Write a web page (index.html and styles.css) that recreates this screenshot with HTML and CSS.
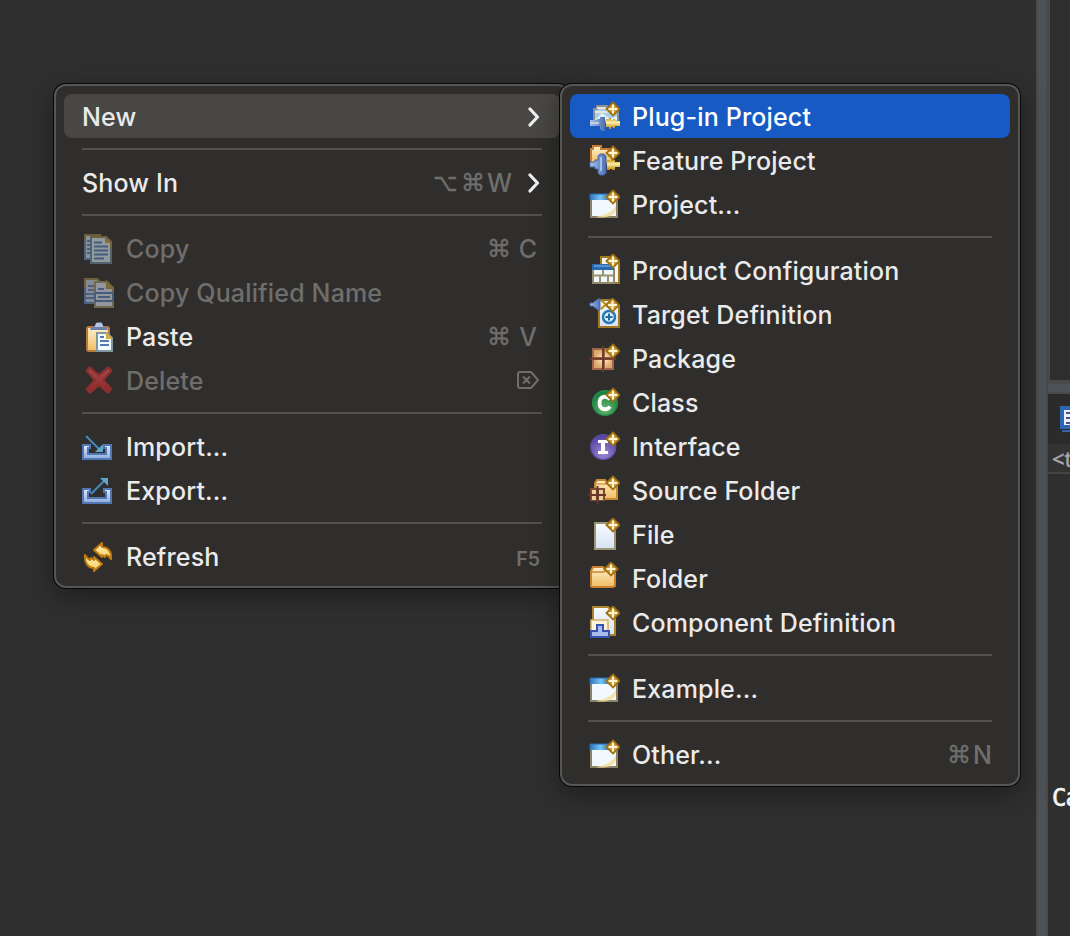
FILE: index.html
```html
<!DOCTYPE html>
<html lang="en">
<head>
<meta charset="utf-8">
<title>Context menu</title>
<link rel="stylesheet" href="styles.css">
</head>
<body>
<svg class="defs" width="0" height="0" aria-hidden="true">
  <defs>
    <linearGradient id="gFolder" x1="0" y1="0" x2="0" y2="1"><stop offset="0" stop-color="#fff0cc"/><stop offset="1" stop-color="#f0bd62"/></linearGradient>
    <linearGradient id="gArrow" x1="0" y1="0" x2="0" y2="1"><stop offset="0" stop-color="#fff3b8"/><stop offset="1" stop-color="#f7c95c"/></linearGradient>
    <linearGradient id="gPage" x1="0" y1="0" x2="0" y2="1"><stop offset="0" stop-color="#f8fbff"/><stop offset="1" stop-color="#d7e2f6"/></linearGradient>
    <linearGradient id="gBlue" x1="0" y1="0" x2="1" y2="0"><stop offset="0" stop-color="#a9c3ea"/><stop offset="1" stop-color="#4a6fb5"/></linearGradient>
    <linearGradient id="gGold" x1="0" y1="0" x2="0" y2="1"><stop offset="0" stop-color="#c79414"/><stop offset=".4" stop-color="#fff0a8"/><stop offset="1" stop-color="#b98207"/></linearGradient>
    <linearGradient id="gTray" x1="0" y1="0" x2="0" y2="1"><stop offset="0" stop-color="#dfe9fb"/><stop offset="1" stop-color="#8eabdc"/></linearGradient>
    <linearGradient id="gRed" x1="0" y1="0" x2="0" y2="1"><stop offset="0" stop-color="#a3504c"/><stop offset="1" stop-color="#952329"/></linearGradient>
    <linearGradient id="gTitle" x1="0" y1="0" x2="1" y2="0"><stop offset="0" stop-color="#2d76c0"/><stop offset=".5" stop-color="#76c3f2"/><stop offset="1" stop-color="#2d68ad"/></linearGradient>
    <radialGradient id="gGreen" cx=".5" cy=".75" r=".65"><stop offset="0" stop-color="#69b66d"/><stop offset="1" stop-color="#1c8040"/></radialGradient>
    <radialGradient id="gViolet" cx=".5" cy=".75" r=".65"><stop offset="0" stop-color="#9d8bd5"/><stop offset="1" stop-color="#5845a2"/></radialGradient>
    <radialGradient id="gTile"><stop offset="0" stop-color="#fff0c2"/><stop offset="1" stop-color="#dca76c"/></radialGradient>
    <symbol id="spark" viewBox="0 0 16 16"><path d="M8 1.400 14.600 8 8 14.600 1.400 8Z" fill="#c9a04a" stroke="#a0710c" stroke-width="1.800"/><path d="M8 3.600v8.800M3.600 8h8.800" stroke="#fff4cf" stroke-width="2"/></symbol>
    <symbol id="i-plugin" viewBox="0 0 32 32"><path d="M6 22V9h3V6h10v3h11v13Z" fill="#a8cfee" stroke="#8c8f91" stroke-width="2"/><path d="M7 12h19M9 8h9" stroke="#e5e5db" stroke-width="2"/><path d="M7 20 14 13 22 19 29 16v4H7Z" fill="#e3f3fc"/><path d="M2 20h7v-1h3v-2h5v14h-3l-2-2v-3H2Z" fill="url(#gBlue)"/><path d="M2 23h9" stroke="#c3d0df" stroke-width="2"/><path d="M18 19h3v-1h2v2h2v-1h2v2h5v5h-5v2h-2v-1h-2v2h-2v-2h-3Z" fill="url(#gGold)"/><use href="#spark" x="17" y="1" width="16" height="16"/></symbol>
    <symbol id="i-feature" viewBox="0 0 32 32"><path d="M3 19V5h2V2h8v3h11v14Z" fill="url(#gFolder)" stroke="#c67e35" stroke-width="2"/><path d="M2 18h5v-2h3v-4l2-2h4l2 2v17l-2 2h-4l-2-2v-4H7v-2H2Z" fill="url(#gBlue)" stroke="#4166ac"/><path d="M13 13v14" stroke="#a5bfe8" stroke-width="2"/><path d="M19 16h3v1h2v-1h3v2h5v5h-5v3h-3v-1h-2v1h-3Z" fill="url(#gGold)"/><use href="#spark" x="17" y="1" width="16" height="16"/></symbol>
    <symbol id="i-window" viewBox="0 0 32 32"><path d="M3 7h26v22H3Z" fill="#f1f8fe" stroke="#8c826a" stroke-width="2"/><path d="M2 6h21v6H2Z" fill="url(#gTitle)"/><path d="M2 12v-6h22" fill="none" stroke="#286aad"/><path d="M28 15c0 7-9 12-20 14 8 2 20-1 20-8Z" fill="#f4df9a" opacity=".85"/><use href="#spark" x="17" y="1" width="16" height="16"/></symbol>
    <symbol id="i-product" viewBox="0 0 32 32"><path d="M13 3h12l6 6v20H13Z" fill="#f4f5f4" stroke="#a27a25" stroke-width="2"/><path d="M5 15h21v14H5Z" fill="#eff7fb" stroke="#92896b" stroke-width="2"/><path d="M5 21.500h20M15 16v5M12 21v8M20 22v7" stroke="#9a9171" stroke-width="2"/><path d="M4 10h22v6H4Z" fill="#286ab0"/><path d="M6 12h18" stroke="#689edb" stroke-width="1.500"/><use href="#spark" x="17" y="-1" width="16" height="16"/></symbol>
    <symbol id="i-target" viewBox="0 0 32 32"><path d="M11 2h14l6 6v21H11Z" fill="url(#gPage)" stroke="#a27a25" stroke-width="2"/><circle cx="21" cy="19" r="6" fill="#e0eefa" stroke="#2479b8" stroke-width="2.500"/><path d="M21 15.500v7M17.500 19h7" stroke="#226ba3" stroke-width="2"/><path d="M2 5h3l5-4h2v11h-2l-5-4H2Z" fill="url(#gBlue)" stroke="#4a6fb5"/><path d="M13 2 18 6.500 13 11" fill="#fff0bf" stroke="#bd890e" stroke-width="1.800"/><use href="#spark" x="16.500" y="-1" width="16" height="16"/></symbol>
    <symbol id="i-package" viewBox="0 0 32 32"><path d="M4 6h22v22H4Z" fill="#9f6548"/><path d="M6 8h8v7H6Zm11 0h8v7h-8ZM6 18h8v8H6Zm11 0h7v8h-7Z" fill="url(#gTile)"/><path d="M15 4v26M2 16.700h26" stroke="#6c3b2a" stroke-width="2"/><use href="#spark" x="17" y="1" width="16" height="16"/></symbol>
    <symbol id="i-class" viewBox="0 0 32 32"><circle cx="17" cy="17" r="12.300" fill="url(#gGreen)" stroke="#24904b" stroke-width="1.500"/><path d="M22 13.500C19 9 11.500 10 11.500 17s7.500 8 10.500 3.500" fill="none" stroke="#fff" stroke-width="3.800"/><use href="#spark" x="17" y="1" width="16" height="16"/></symbol>
    <symbol id="i-interface" viewBox="0 0 32 32"><circle cx="15.300" cy="17" r="12.500" fill="url(#gViolet)" stroke="#604eac" stroke-width="1.200"/><path d="M10 10h10v3h-3v8h3v3H10v-3h3v-8h-3Z" fill="#fff"/><use href="#spark" x="17" y="1" width="16" height="16"/></symbol>
    <symbol id="i-source" viewBox="0 0 32 32"><path d="M7 25V9l2-3h8l2 3h10v16Z" fill="url(#gFolder)" stroke="#c9882f" stroke-width="2"/><path d="M8 10h11" stroke="#dd9d56" stroke-width="1.500"/><path d="M2 14h15v13H2Z" fill="#7c4933"/><path d="M4 16h4v4H4Zm7 0h4v4h-4ZM4 22h4v4H4Zm7 0h4v4h-4Z" fill="#eccf9b"/><path d="M9.500 12v18M0 21h18" stroke="#65372a" stroke-width="2"/><use href="#spark" x="17" y="1" width="16" height="16"/></symbol>
    <symbol id="i-file" viewBox="0 0 32 32"><path d="M7 5h20v26H7Z" fill="url(#gPage)" stroke="#9d9676" stroke-width="2"/><use href="#spark" x="17" y="-1" width="16" height="16"/></symbol>
    <symbol id="i-folder" viewBox="0 0 32 32"><path d="M3 24V9l2-4h10l2 3h10v16l-2 1H4Z" fill="url(#gFolder)" stroke="#c98231" stroke-width="2"/><path d="M4 10h12l2-2h8" fill="none" stroke="#cc8335" stroke-width="1.500"/><path d="M6 7h8" stroke="#ffeac7" stroke-width="2"/><use href="#spark" x="15" y="-1" width="16" height="16"/></symbol>
    <symbol id="i-component" viewBox="0 0 32 32"><path d="M5 1h15l7 7v21H5Z" fill="url(#gPage)" stroke="#aa842f" stroke-width="2"/><path d="M3 14h17v16H3Z" fill="#fff2d5" stroke="#cfb06f" stroke-width="1.500"/><path d="M9 19h6v6h6v6H3v-6h6Z" fill="#a7bbec" stroke="#3951b3" stroke-width="2"/><use href="#spark" x="17" y="-1" width="16" height="16"/></symbol>
    <symbol id="i-copy" viewBox="0 0 32 32"><path d="M3 3h15v24H3Z" fill="#87939a" stroke="#6d5d3e" stroke-width="2"/><path d="M3 9v18h5" fill="none" stroke="#52647c" stroke-width="2"/><path d="M5 9h3M5 13h3M5 17h3M5 21h3" stroke="#46607c" stroke-width="1.800"/><path d="M9 5h15l5 5v21H9Z" fill="#929b9c" stroke="#526370" stroke-width="2"/><path d="M9 5h15l5 5v7" fill="none" stroke="#755f3a" stroke-width="2"/><path d="M23 5v6h6Z" fill="#8a6f3d"/><path d="M12 10.500h8M12 14.500h14M12 18.500h14M12 22.500h14M12 26.500h10" stroke="#455c7e" stroke-width="2"/></symbol>
    <symbol id="i-copyq" viewBox="0 0 32 32"><path d="M3 3h12l5 5v19H3Z" fill="#858b90" stroke="#6f6040" stroke-width="2"/><path d="M3 12v15h10M6 10h6M6 14h6M3 18h9M3 22h9" fill="none" stroke="#4b6183" stroke-width="2"/><path d="M13 6h12l6 6v19H13Z" fill="#92979b" stroke="#71694e" stroke-width="2"/><path d="M25 6v6h6Z" fill="#8b774b" stroke="#77653b" stroke-width="2"/><path d="M16 13h6" stroke="#455c7e" stroke-width="2"/><path d="M13 17h18v8H13ZM16 21h12" fill="none" stroke="#455c7e" stroke-width="2"/></symbol>
    <symbol id="i-paste" viewBox="0 0 32 32"><rect x="5" y="7" width="22" height="24" rx="2" fill="url(#gFolder)" stroke="#ba793d" stroke-width="2"/><path d="M8 10c0-3 5-3 5-5 0-4 8-4 8 0 0 2 5 2 5 5Z" fill="#6980ab"/><path d="M13 6h8M14 4h6" stroke="#b8c4dc" stroke-width="2"/><path d="M15 13h10l5 5v13H15Z" fill="#f2fbff" stroke="#7d98a0" stroke-width="2"/><path d="M24 12v7h7Z" fill="#d6ae3f"/><path d="M18 17h4M18 21h9M18 25h9" stroke="#527bb2" stroke-width="1.800"/></symbol>
    <symbol id="i-delete" viewBox="0 0 32 32"><path d="m7.500 3.500 9.500 8 9.500-8 2.500 3.500-8 9 8 9-3 3.500-9-8-9 8L5 25l8-9-8-9Z" fill="url(#gRed)" stroke="#8d302f" stroke-width="2.500" stroke-linejoin="round"/></symbol>
    <symbol id="tray" viewBox="0 0 32 32"><path d="M1 15h7v3H6v6h18v-6h-2v-3h7v14H1Z" fill="url(#gTray)" stroke="#5076b6" stroke-width="2"/></symbol>
    <symbol id="i-import" viewBox="0 0 32 32"><use href="#tray" width="32" height="32"/><path d="m4 6 14 14" stroke="#438aba" stroke-width="2"/><path d="M21 14v8h-8Z" fill="#62a5cb"/></symbol>
    <symbol id="i-export" viewBox="0 0 32 32"><use href="#tray" width="32" height="32"/><path d="M9 20 23 6" stroke="#438aba" stroke-width="2"/><path d="M18 4h8v8Z" fill="#62a5cb"/></symbol>
    <symbol id="i-refresh" viewBox="0 0 32 32"><g fill="url(#gArrow)" stroke="#bf790e" stroke-width="2" stroke-linejoin="round"><path d="M12 10 20 3v4c6 0 10 5 9 12-2-2-2-4-5-4l-1 2-3-2v2Z"/><path d="M20 24 12 31v-3C6 28 2 22 3 15c2 2 2 4 5 5l1-2 3 2v-3Z"/></g></symbol>
    <symbol id="chevron" viewBox="0 0 12 20"><path d="m2 2 7.500 8L2 18" fill="none" stroke="#f0efef" stroke-width="3.200" stroke-linecap="round" stroke-linejoin="round"/></symbol>
  </defs>
</svg>
<div class="desktop">
  <div class="canvas"></div>
  <div class="splitter"></div>
  <div class="side">
    <div class="pane-top"></div>
    <div class="splitter-h"></div>
    <div class="pane-bottom">
      <div class="tab"><svg class="tab-icon" width="32" height="32" viewBox="0 0 32 32"><path d="M2 3h28v19H2Z" fill="#edf1f7" stroke="#2d67b4" stroke-width="4"/><path d="M6 8h12M6 13h12M6 18h10" stroke="#43538c" stroke-width="2"/><path d="M2 26h26" stroke="#3565a8" stroke-width="2"/></svg></div>
      <div class="status">&lt;t</div>
      <div class="console">Ca</div>
    </div>
  </div>

  <div class="menu menu-main">
    <div class="item hover"><span class="label">New</span><svg class="chev"><use href="#chevron"/></svg></div>
    <div class="sep"></div>
    <div class="item"><span class="label">Show In</span><span class="keys"><b class="sym option">⌥</b><b class="sym">⌘</b><b class="letter">W</b></span><svg class="chev"><use href="#chevron"/></svg></div>
    <div class="sep"></div>
    <div class="item off"><svg class="icon"><use href="#i-copy"/></svg><span class="label">Copy</span><span class="keys"><b class="sym">⌘</b><b class="letter wide">C</b></span></div>
    <div class="item off"><svg class="icon"><use href="#i-copyq"/></svg><span class="label">Copy Qualified Name</span></div>
    <div class="item"><svg class="icon"><use href="#i-paste"/></svg><span class="label">Paste</span><span class="keys"><b class="sym">⌘</b><b class="letter wide">V</b></span></div>
    <div class="item off"><svg class="icon"><use href="#i-delete"/></svg><span class="label">Delete</span><svg class="del-key" viewBox="0 0 24 20"><path d="M4 2h11l7 8-7 8H4q-2 0-2-2V4q0-2 2-2ZM7 6.500l7 7m0-7-7 7" fill="none" stroke="#6f6e6c" stroke-width="2" stroke-linejoin="round"/></svg></div>
    <div class="sep"></div>
    <div class="item"><svg class="icon"><use href="#i-import"/></svg><span class="label">Import...</span></div>
    <div class="item"><svg class="icon"><use href="#i-export"/></svg><span class="label">Export...</span></div>
    <div class="sep"></div>
    <div class="item"><svg class="icon"><use href="#i-refresh"/></svg><span class="label">Refresh</span><span class="fkey">F5</span></div>
  </div>

  <div class="menu menu-sub">
    <div class="item selected"><svg class="icon"><use href="#i-plugin"/></svg><span class="label">Plug-in Project</span></div>
    <div class="item"><svg class="icon"><use href="#i-feature"/></svg><span class="label">Feature Project</span></div>
    <div class="item"><svg class="icon"><use href="#i-window"/></svg><span class="label">Project...</span></div>
    <div class="sep"></div>
    <div class="item"><svg class="icon"><use href="#i-product"/></svg><span class="label">Product Configuration</span></div>
    <div class="item"><svg class="icon"><use href="#i-target"/></svg><span class="label">Target Definition</span></div>
    <div class="item"><svg class="icon"><use href="#i-package"/></svg><span class="label">Package</span></div>
    <div class="item"><svg class="icon"><use href="#i-class"/></svg><span class="label">Class</span></div>
    <div class="item"><svg class="icon"><use href="#i-interface"/></svg><span class="label">Interface</span></div>
    <div class="item"><svg class="icon"><use href="#i-source"/></svg><span class="label">Source Folder</span></div>
    <div class="item"><svg class="icon"><use href="#i-file"/></svg><span class="label">File</span></div>
    <div class="item"><svg class="icon"><use href="#i-folder"/></svg><span class="label">Folder</span></div>
    <div class="item"><svg class="icon"><use href="#i-component"/></svg><span class="label">Component Definition</span></div>
    <div class="sep"></div>
    <div class="item"><svg class="icon"><use href="#i-window"/></svg><span class="label">Example...</span></div>
    <div class="sep"></div>
    <div class="item"><svg class="icon"><use href="#i-window"/></svg><span class="label">Other...</span><span class="keys"><b class="sym">⌘</b><b class="letter">N</b></span></div>
  </div>
</div>
</body>
</html>
```
FILE: styles.css
```css
* { box-sizing: border-box; }
body { margin: 0; background: #2f2f2f; font-family: Inter, "Liberation Sans", sans-serif; }
.defs { position: absolute; }
.desktop { position: relative; display: flex; width: 1070px; height: 936px; overflow: hidden; }
.canvas { flex: 1; background: #2f2f2f; }
.splitter { width: 12px; background: #4c5255; border: solid #4a4a4c; border-width: 0 2px; }
.side { width: 22px; display: flex; flex-direction: column; overflow: hidden; }
.pane-top { height: 380px; border-left: 2px solid #4a4a4c; background: #2e2e2e; }
.splitter-h { height: 14px; background: #4c5255; border: solid #4a4a4c; border-width: 4px 0 2px; }
.pane-bottom { flex: 1; background: #2f2f2f; white-space: nowrap; }
.tab { height: 50px; padding: 11px 0 0 12px; background: #2b2b2b; }
.tab-icon { display: block; }
.status { height: 30px; padding-left: 4px; border-bottom: 2px solid #444; background: #333; color: #a9a9a9; font: 22px/29px "Noto Sans", sans-serif; -webkit-text-stroke: .4px #a9a9a9; }
.console { padding: 307px 0 0 4px; color: #f2f2f2; font: 24px/34px "DejaVu Sans Mono", monospace; letter-spacing: -1px; -webkit-text-stroke: .6px #f2f2f2; }

.menu { position: absolute; top: 84px; padding: 8px; border: 2px solid #565655; border-radius: 12px; background: #2f2e2c; box-shadow: 0 0 0 1px #080808, 0 8px 28px rgba(0, 0, 0, .38); }
.menu-main { left: 54px; width: 516px; }
.menu-sub { left: 560px; width: 460px; }
.item { display: flex; align-items: center; height: 44px; padding: 0 18px; border-radius: 8px; color: #ebeaea; font-size: 25px; font-weight: 450; letter-spacing: .16px; white-space: nowrap; }
.menu-main .item { padding-right: 20px; }
.hover { background: #484745; }
.menu .selected { background: #175ac3; color: #fff; }
.menu .off { color: #6f6e6c; }
.label { flex: 1; line-height: 44px; padding-top: 1px; }
.icon { width: 32px; height: 32px; margin-right: 12px; flex: none; }
.sep { height: 2px; margin: 10px 18px; background: #525150; }
.chev { width: 12px; height: 20px; margin-left: 16px; transform: translateY(1px); }
.keys { display: flex; align-items: center; color: #6f6e6c; letter-spacing: 0; padding-top: 1px; }
.sym { width: 26px; font: 24px/44px "DejaVu Sans", sans-serif; -webkit-text-stroke: .4px #6f6e6c; }
.option { width: 28px; transform: scaleX(.88); transform-origin: left; }
.letter { font-weight: 450; text-align: right; }
.wide { width: 24px; margin-right: 3px; }
.del-key { width: 24px; height: 20px; }
.fkey { color: #6f6e6c; font-size: 19.500px; font-weight: 600; padding-top: 5px; letter-spacing: 0; }
```
